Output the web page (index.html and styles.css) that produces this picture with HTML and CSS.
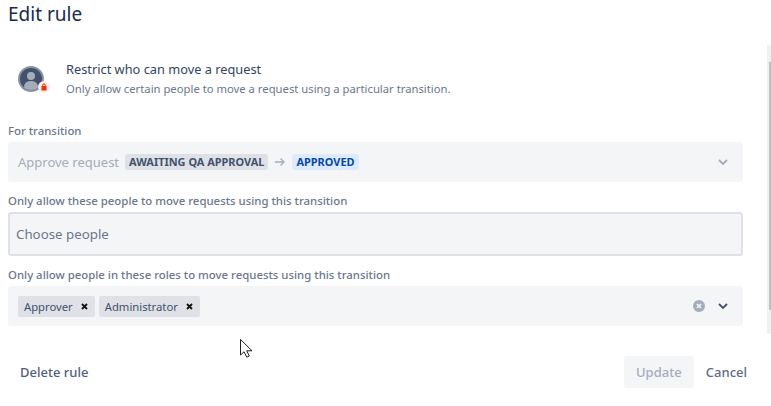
FILE: index.html
```html
<!DOCTYPE html>
<html lang="en">
<head>
    <meta charset="UTF-8">
    <title>Edit rule</title>
    <link rel="stylesheet" href="styles.css">
</head>
<body>
    <div class="scrollbar"><div class="scrollbar-thumb"></div></div>

    <h1 class="title">Edit rule</h1>

    <div class="rule-info">
        <svg class="rule-icon" width="32" height="32" viewBox="0 0 32 32">
            <circle cx="13" cy="13" r="13" fill="#8993a4"/>
            <circle cx="13" cy="13" r="11" fill="#42526e"/>
            <clipPath id="avatar-clip"><circle cx="13" cy="13" r="11"/></clipPath>
            <g clip-path="url(#avatar-clip)" fill="#a5adba">
                <circle cx="13" cy="10" r="4"/>
                <rect x="6" y="15" width="14" height="12" rx="6"/>
            </g>
            <circle cx="26" cy="21" r="6" fill="#ffebe6"/>
            <rect x="23.5" y="20" width="5" height="4.5" fill="#de350b"/>
            <path d="M24.8 20v-1a1.2 1.2 0 0 1 2.4 0v1" fill="none" stroke="#de350b"/>
        </svg>
        <div>
            <div class="rule-name">Restrict who can move a request</div>
            <div class="rule-desc">Only allow certain people to move a request using a particular transition.</div>
        </div>
    </div>

    <div class="field field-transition">
        <label class="field-label">For transition</label>
        <div class="select">
            <span class="muted">Approve request</span>
            <span class="lozenge">AWAITING QA APPROVAL</span>
            <svg class="arrow" width="12" height="10" viewBox="0 0 12 10"><path d="M1 5h9M6.500 1.500 10 5 6.500 8.500" fill="none" stroke="#a5adba" stroke-width="1.300"/></svg>
            <span class="lozenge lozenge-blue">APPROVED</span>
            <svg class="chevron" width="10" height="7" viewBox="0 0 10 7"><path d="M1 1l4 4 4-4" fill="none" stroke="#a5adba" stroke-width="1.800"/></svg>
        </div>
    </div>

    <div class="field">
        <label class="field-label">Only allow these people to move requests using this transition</label>
        <div class="input">Choose people</div>
    </div>

    <div class="field">
        <label class="field-label">Only allow people in these roles to move requests using this transition</label>
        <div class="select select-roles">
            <span class="tag">Approver <svg class="tag-x" width="7" height="7" viewBox="0 0 7 7"><path d="M1 1l5 5M6 1L1 6" stroke="#111" stroke-width="1.800"/></svg></span>
            <span class="tag">Administrator <svg class="tag-x" width="7" height="7" viewBox="0 0 7 7"><path d="M1 1l5 5M6 1L1 6" stroke="#111" stroke-width="1.800"/></svg></span>
            <svg class="clear" width="12" height="12" viewBox="0 0 13 13">
                <circle cx="6.500" cy="6.500" r="6.500" fill="#a5adba"/>
                <path d="M4.300 4.300l4.400 4.400M8.700 4.300l-4.400 4.400" stroke="#f4f5f7" stroke-width="1.800"/>
            </svg>
            <svg class="chevron chevron-dark" width="10" height="7" viewBox="0 0 10 7"><path d="M1 1l4 4 4-4" fill="none" stroke="#42526e" stroke-width="1.800"/></svg>
        </div>
    </div>

    <svg class="cursor" width="14" height="21" viewBox="0 0 14 21"><path d="M.5.500v15.500l3.500-3.200 2.800 5.400 2.500-1.200-2.600-5.200h5.300z" fill="#fff" stroke="#222" stroke-width="1"/></svg>

    <div class="footer">
        <button class="btn">Delete rule</button>
        <div class="footer-right">
            <button class="btn btn-disabled">Update</button>
            <button class="btn btn-cancel">Cancel</button>
        </div>
    </div>
</body>
</html>
```

FILE: styles.css
```css
html, body {
    height: 100%;
}

body {
    position: relative;
    margin: 0;
    padding: 0 28px 0 8px;
    box-sizing: border-box;
    overflow: hidden;
    background-color: #fff;
    font-family: "Noto Sans", sans-serif;
    color: #172b4d;
}

.title {
    margin: 0;
    padding-top: 1px;
    font-size: 19px;
    font-weight: 400;
    line-height: 26px;
}

.rule-info {
    display: flex;
    align-items: center;
    gap: 16px;
    margin: 33px 0 0 10px;
    height: 40px;
}

.rule-icon {
    margin-top: 4px;
}

.rule-name {
    margin-bottom: 2px;
    font-size: 12.8px;
    line-height: 16px;
    color: #344563;
}

.rule-desc {
    font-size: 11.27px;
    line-height: 20px;
    color: #6b778c;
}

.field-transition {
    margin-top: 22px;
}

.field {
    margin-bottom: 10px;
}

.field-label {
    display: block;
    height: 17px;
    margin-bottom: 3px;
    font-size: 11.4px;
    font-weight: 500;
    line-height: 17px;
    color: #6b778c;
}

.select {
    display: flex;
    align-items: center;
    height: 40px;
    padding: 0 15px 0 10px;
    border-radius: 3px;
    background-color: #f4f5f7;
    font-size: 13px;
}

.muted {
    margin-right: 6px;
    color: #a5adba;
}

.lozenge {
    padding: 0 4px;
    border-radius: 3px;
    background-color: #dfe1e6;
    color: #42526e;
    font-size: 10.95px;
    font-weight: 700;
    line-height: 16px;
}

.lozenge-blue {
    background-color: #deebff;
    color: #0747a6;
}

.arrow {
    margin: 0 6px;
}

.chevron {
    margin-left: auto;
}

.input {
    height: 44px;
    padding: 0 6px;
    box-sizing: border-box;
    border: 2px solid #dfe1e6;
    border-radius: 3px;
    background-color: #f4f5f7;
    color: #6b778c;
    font-size: 13.3px;
    line-height: 40px;
}

.tag {
    display: flex;
    align-items: center;
    height: 21px;
    margin-right: 4px;
    padding: 0 7px 0 6px;
    border-radius: 2px;
    background-color: #dfe1e6;
    color: #42526e;
    font-size: 11.25px;
}

.tag-x {
    margin-left: 8px;
}

.clear {
    margin-left: auto;
}

.chevron-dark {
    margin-left: 13px;
}

.footer {
    display: flex;
    justify-content: space-between;
    align-items: center;
    margin-top: 30px;
    margin-right: -16px;
}

.footer-right {
    display: flex;
    align-items: center;
}

.btn {
    height: 32px;
    padding: 0 12px;
    border: none;
    border-radius: 3px;
    background: none;
    font-family: inherit;
    font-size: 13px;
    font-weight: 500;
    color: #505f79;
}

.btn-disabled {
    width: 70px;
    padding: 0;
    background-color: #f4f5f7;
    color: #a5adba;
}

.btn-cancel {
    color: #5e6c84;
}

.cursor {
    position: absolute;
    left: 240px;
    top: 339px;
}

.scrollbar {
    position: absolute;
    top: 45px;
    right: 0;
    width: 4px;
    height: 289px;
    background-color: #f1f1f1;
}

.scrollbar-thumb {
    width: 2px;
    height: 248px;
    margin: 17px 0 0 2px;
    background-color: #c1c1c1;
}
```
